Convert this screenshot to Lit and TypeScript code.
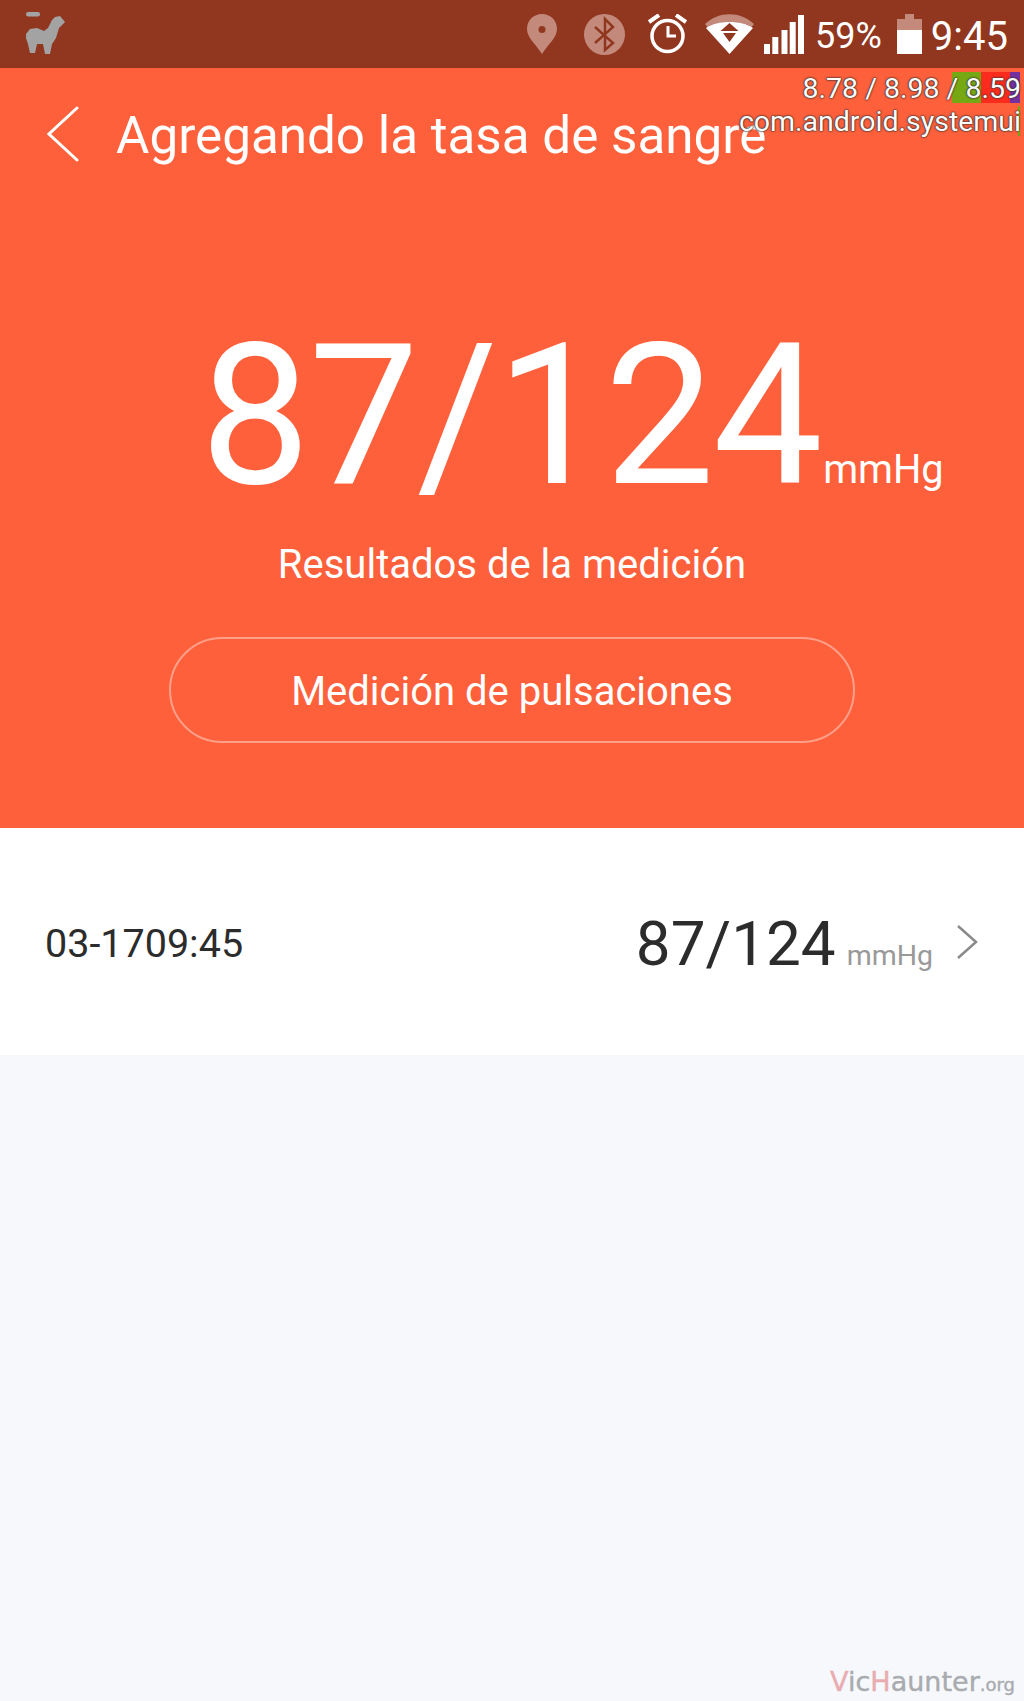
import { LitElement, html, css } from "lit";
import { customElement } from "lit/decorators.js";

@customElement("app-root")
export class AppRoot extends LitElement {
  static styles = css`
    :host { display: block; width: 1024px; height: 1701px; background: #f6f8fc; font-family: Roboto, "Liberation Sans", sans-serif; position: relative; overflow: hidden; }
    .status { height: 68px; background: #913720; display: flex; align-items: center; padding: 0 16px 0 24px; box-sizing: border-box; color: #fff; }
    .llama { width: 42px; height: 44px; }
    .spacer { flex: 1; }
    .icons { display: flex; align-items: center; }
    .pin { margin-right: 27px; }
    .bt { margin-right: 23px; }
    .alarm { margin-right: 18px; }
    .wifi { margin-right: 10px; }
    .pct { font-size: 36px; margin-left: 11px; margin-top: 4px; }
    .battery { margin-left: 15px; }
    .time { font-size: 40px; margin-left: 9px; margin-top: 4px; }
    .hero { height: 760px; background: #fe603b; color: #fff; display: flex; flex-direction: column; align-items: center; }
    .bar { align-self: stretch; height: 130px; display: flex; align-items: center; padding-left: 47px; gap: 37px; }
    .title { font-size: 51.200px; line-height: 58px; margin-top: 6px; }
    .back { margin-top: 2px; }
    .reading { display: flex; align-items: baseline; margin-top: 101px; height: 231px; padding-left: 120px; }
    .big { font-size: 196px; line-height: 235px; letter-spacing: -1.800px; }
    .unit { font-size: 39.800px; margin-left: 2px; }
    .caption { font-size: 40px; line-height: 46px; margin-top: 12px; }
    .button { width: 686px; height: 106px; box-sizing: border-box; margin-top: 49px; padding-top: 2px; border: 2.500px solid rgba(255,255,255,.4); border-radius: 53px; display: flex; align-items: center; justify-content: center; font-size: 40px; }
    .row { height: 227px; background: #fff; display: flex; align-items: center; padding: 0 46px 0 45px; }
    .date { font-size: 39.500px; color: #2c2c2c; margin-top: 4px; }
    .value { font-size: 62px; color: #2c2c2c; }
    .rowunit { font-size: 28.500px; color: #999; margin-left: 11px; }
    .rowval { display: flex; align-items: baseline; margin-right: 23px; margin-top: 3px; }
    .overlay { position: absolute; right: 3px; top: 72px; text-align: right; color: #fff; font-size: 28.500px; line-height: 33px; white-space: nowrap; text-shadow: 0 0 2px #333, 0 0 2px #333, 0 0 1px #333; }
    .marks { position: absolute; left: 0; top: 0; width: 100%; height: 0; }
    .mark { position: absolute; top: 72px; height: 31px; }
    .green { left: 952px; width: 29px; background: #76a814; }
    .red { left: 981px; width: 29px; background: #fb2c1e; }
    .purple { left: 1010px; width: 10px; background: #7530a0; }
    .tick { left: 1018px; top: 106px; width: 2px; height: 30px; background: #76a814; }
    .watermark { position: absolute; right: 9px; bottom: 4px; font-family: "DejaVu Sans", sans-serif; color: #a9abaf; font-size: 27px; white-space: nowrap; -webkit-text-stroke: 0.4px #a9abaf; }
    .watermark b { font-weight: 400; color: #e9acb0; -webkit-text-stroke: 0.4px #e9acb0; }
    .watermark small { font-size: 18px; }
  `;

  render() {
    return html`
      <div class="status">
        <svg class="llama" viewBox="24 12 42 44" fill="#a3a3a3">
          <rect x="26" y="12" width="14" height="4.500" rx="2.200"/>
          <path d="M55 17L60 16L65 22L59 28L56 38L52 44L50 54L45 54L43 44L37 44L35 53L30 53L28 44L26 38L26 34L30 29L37 28L44 31L48 28L52 20Z"/>
        </svg>
        <div class="spacer"></div>
        <div class="icons">
          <svg class="pin" width="30" height="40" viewBox="0 0 30 40">
            <path fill="#c38a7c" fill-rule="evenodd" d="M15 0C6.500 0 0 6.500 0 15c0 9 9 15 15 25 6-10 15-16 15-25C30 6.500 23.500 0 15 0zm0 12a3.500 3.500 0 1 1 0 7 3.500 3.500 0 0 1 0-7z"/>
          </svg>
          <svg class="bt" width="41" height="41" viewBox="0 0 41 41">
            <circle cx="20.500" cy="20.500" r="20.500" fill="#c38a7c"/>
            <path d="M11 13l18 16-8 7V5l8 8-18 16" fill="none" stroke="#913720" stroke-width="2.500"/>
          </svg>
          <svg class="alarm" width="39" height="40" viewBox="0 0 39 40" fill="none" stroke="#fff">
            <circle cx="19.500" cy="22" r="15.500" stroke-width="3.500"/>
            <path d="M20 12v10h8" stroke-width="3"/>
            <path d="M1 8l10-7M28 1l10 7" stroke-width="4"/>
          </svg>
          <svg class="wifi" width="49" height="40" viewBox="0 0 49 40">
            <path fill="#c38a7c" d="M0 10C14-3 35-3 49 10l-4 5C32 6 17 6 4 15z"/>
            <path fill="#fff" fill-rule="evenodd" d="M1 14C13 6 36 6 48 14L24.500 40zM24.500 9l-9 8h18zM18 19l6.500 9 6.500-9z"/>
          </svg>
          <svg width="40" height="40" viewBox="0 0 40 40" fill="#fff">
            <rect x="0" y="30" width="6" height="10"/><rect x="8.300" y="23" width="6" height="17"/><rect x="17.500" y="16" width="6" height="24"/><rect x="25.700" y="8" width="6" height="32"/><rect x="34" y="1" width="6" height="39"/>
          </svg>
          <span class="pct">59%</span>
          <svg class="battery" width="25" height="40" viewBox="0 0 25 40">
            <path fill="#c38a7c" d="M0 5h8V0h9v5h8v12H0z"/>
            <rect y="16" width="25" height="24" fill="#fff"/>
          </svg>
          <span class="time">9:45</span>
        </div>
      </div>
      <div class="hero">
        <div class="bar">
          <svg class="back" width="32" height="56" viewBox="0 0 32 56" fill="none" stroke="#fff" stroke-width="3" stroke-linecap="round"><path d="M30 2L2 28l28 26"/></svg>
          <span class="title">Agregando la tasa de sangre</span>
        </div>
        <div class="reading"><span class="big">87/124</span><span class="unit">mmHg</span></div>
        <div class="caption">Resultados de la medición</div>
        <div class="button">Medición de pulsaciones</div>
      </div>
      <div class="row">
        <span class="date">03-1709:45</span>
        <div class="spacer"></div>
        <div class="rowval"><span class="value">87/124</span><span class="rowunit">mmHg</span></div>
        <svg width="22" height="36" viewBox="0 0 22 36" fill="none" stroke="#8a8a8a" stroke-width="2.500"><path d="M2 2l18 16L2 34"/></svg>
      </div>
      <div class="marks">
        <div class="mark green"></div><div class="mark red"></div><div class="mark purple"></div><div class="mark tick"></div>
      </div>
      <div class="overlay">
        <div>8.78 / 8.98 / 8.59</div>
        <div>com.android.systemui</div>
      </div>
      <div class="watermark"><b>V</b>ic<b>H</b>aunter<small>.org</small></div>
    `;
  }
}
